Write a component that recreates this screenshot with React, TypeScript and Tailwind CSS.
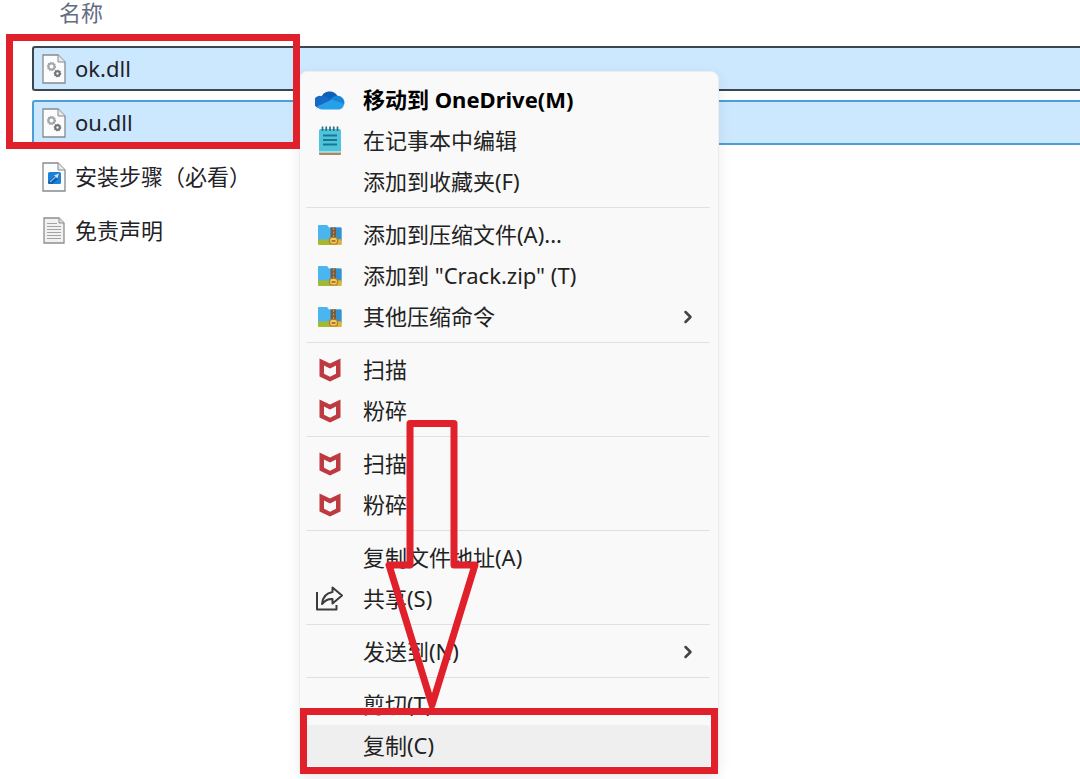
import { ChevronRight } from "lucide-react";
import type { ReactNode } from "react";

type FileKind = "dll" | "shortcut" | "text";

type FileEntry = {
  name: string;
  kind: FileKind;
  state?: "focused" | "selected";
};

type MenuEntry = {
  label: string;
  icon?: ReactNode;
  bold?: boolean;
  submenu?: boolean;
  active?: boolean;
};

function Gear({ cx, cy, r, color }: { cx: number; cy: number; r: number; color: string }) {
  return (
    <g stroke={color} fill="none">
      <circle cx={cx} cy={cy} r={r} strokeWidth="2" />
      <circle cx={cx} cy={cy} r={r + 1} strokeWidth="1.2" strokeDasharray="1.4 1" />
    </g>
  );
}

function FileIcon({ kind }: { kind: FileKind }) {
  if (kind === "text") {
    return (
      <svg viewBox="0 0 24 30" className="h-[30px] w-6 shrink-0" aria-hidden>
        <path d="M2 2H17L22 7V27H2Z" fill="#f1f1f1" stroke="#8f8f8f" strokeWidth="1.3" />
        <path d="M17 2V7H22" fill="#dcdcdc" stroke="#8f8f8f" />
        <path d="M5 7.5H15M5 10.5H19M5 13.5H19M5 16.5H19M5 19.5H19M5 22.5H19" stroke="#a3a3a3" strokeWidth="1.2" />
      </svg>
    );
  }
  return (
    <svg viewBox="0 0 24 30" className="h-[30px] w-6 shrink-0" aria-hidden>
      <path d="M1 1H16L23 8V29H1Z" fill="#fcfcfc" stroke="#858b90" strokeWidth="1.3" />
      <path d="M16 1V8H23" fill="#e9e9e9" stroke="#858b90" />
      {kind === "dll" ? (
        <>
          <Gear cx={9.5} cy={12.5} r={3} color="#a3a7aa" />
          <Gear cx={15.5} cy={19.5} r={2.2} color="#6f7578" />
        </>
      ) : (
        <>
          <rect x="6" y="10" width="13" height="12" rx="1.5" fill="#1e7fd6" />
          <path d="M6 20L13 14L17 12L16 17L10 22H7.5Q6 22 6 20Z" fill="#1559a8" />
          <path d="M12 13.5L17 11.5L15.5 16.5Z" fill="#c7e6fb" />
          <path d="M8 20L13.5 15" stroke="#7cc2f2" strokeWidth="1.2" />
        </>
      )}
    </svg>
  );
}

function OneDriveIcon() {
  return (
    <svg viewBox="0 0 30 20" className="h-5 w-[30px] shrink-0" aria-hidden>
      <path d="M6 8A9 9 0 0 1 22.5 6Q18 7 15 12L4 14Z" fill="#0f5fb8" />
      <path d="M7 6.2Q10 5.5 13.5 8L20 12L3 18A6 6 0 0 1 7 6.2Z" fill="#1769c4" />
      <path d="M15 10Q18 5.5 22.5 5.8A6.8 6.8 0 0 1 29 15L19 12Z" fill="#1784dc" />
      <path d="M2 16.5L17 9.5L29 14A5.5 5.5 0 0 1 24 19.5H7Q3.5 19.5 2 16.5Z" fill="#27a0ea" />
    </svg>
  );
}

function NotepadIcon() {
  return (
    <svg viewBox="0 0 24 30" className="h-[30px] w-6" aria-hidden>
      <rect x="1" y="3" width="22" height="24" rx="1.5" fill="#4fc3dc" />
      <path d="M1 26H23V28Q23 29 22 29H2Q1 29 1 28Z" fill="#a88967" />
      <path d="M1 26H23" stroke="#d8eef2" strokeWidth="1.2" />
      <path d="M4.5 0.5V5M8.25 0.5V5M12 0.5V5M15.75 0.5V5M19.5 0.5V5" stroke="#2d6f80" strokeWidth="1.7" />
      <path d="M5 9.5H19M5 14H19M5 18.5H19" stroke="#18778f" strokeWidth="1.8" />
    </svg>
  );
}

function ZipIcon() {
  return (
    <svg viewBox="0 0 24 22" className="h-[22px] w-6" aria-hidden>
      <path d="M0 1.5Q0 1 1 1H9L11 3.5H22.5Q23.500 3.5 23.5 4.5V17H0Z" fill="#4ab5ee" />
      <path d="M12 3.5H22.5Q23.5 3.5 23.5 4.5V17H12Z" fill="#3592d0" />
      <path d="M0 15.5H23.5V20Q23.5 21 22.5 21H1Q0 21 0 20Z" fill="#a5b832" />
      <path d="M12 15.5H23.5V20Q23.5 21 22.5 21H12Z" fill="#e2b33c" />
      <rect x="13" y="3.5" width="5" height="12" fill="#7d5a3a" />
      <path d="M15.5 4V14" stroke="#b8925e" strokeWidth="1.2" strokeDasharray="2 1.5" />
      <rect x="11.5" y="13.5" width="8" height="6.5" rx="2.5" fill="#f3cd62" stroke="#b47a1e" strokeWidth="1.2" />
      <path d="M13.5 17H17.5" stroke="#8a5a1c" strokeWidth="1.4" />
    </svg>
  );
}

function ShieldIcon() {
  return (
    <svg viewBox="0 0 22 24" className="h-6 w-[22px]" aria-hidden>
      <path
        d="M0.5 0.5L11 5.5L21.5 0.5V18.5L11 23.5L0.5 18.5ZM5 7.5V15.8L11 18.7L17 15.8V7.5L11 10.4Z"
        fill="#bd3a40"
        fillRule="evenodd"
      />
    </svg>
  );
}

function ShareIcon() {
  return (
    <svg viewBox="0 0 28 26" className="h-[26px] w-7" fill="none" stroke="#3c3c3c" strokeWidth="2" strokeLinejoin="round" aria-hidden>
      <path d="M1 6V23.5H20.5V19" />
      <path d="M16.5 1.5L26 9.500L16.5 17.5V13Q10.500 12.5 6 18Q7 7.500 16.5 6Z" />
    </svg>
  );
}

const files: FileEntry[] = [
  { name: "ok.dll", kind: "dll", state: "focused" },
  { name: "ou.dll", kind: "dll", state: "selected" },
  { name: "安装步骤（必看）", kind: "shortcut" },
  { name: "免责声明", kind: "text" },
];

const menuGroups: MenuEntry[][] = [
  [
    { label: "移动到 OneDrive(M)", icon: <OneDriveIcon />, bold: true },
    { label: "在记事本中编辑", icon: <NotepadIcon /> },
    { label: "添加到收藏夹(F)" },
  ],
  [
    { label: "添加到压缩文件(A)...", icon: <ZipIcon /> },
    { label: '添加到 "Crack.zip" (T)', icon: <ZipIcon /> },
    { label: "其他压缩命令", icon: <ZipIcon />, submenu: true },
  ],
  [
    { label: "扫描", icon: <ShieldIcon /> },
    { label: "粉碎", icon: <ShieldIcon /> },
  ],
  [
    { label: "扫描", icon: <ShieldIcon /> },
    { label: "粉碎", icon: <ShieldIcon /> },
  ],
  [{ label: "复制文件地址(A)" }, { label: "共享(S)", icon: <ShareIcon /> }],
  [{ label: "发送到(N)", submenu: true }],
  [{ label: "剪切(T)" }, { label: "复制(C)", active: true }],
];

const rowStyles = {
  focused: "border-[#3a4650] bg-[#cce8ff]",
  selected: "border-[#4a9fd8] bg-[#cce8ff]",
  none: "border-transparent",
};

function FileRow({ file }: { file: FileEntry }) {
  return (
    <li
      className={`flex h-[45px] items-center gap-[9px] rounded-l-[3px] border-2 border-r-0 pl-2 text-[#1f2328] ${rowStyles[file.state ?? "none"]}`}
    >
      <FileIcon kind={file.kind} />
      <span className="pb-0.5">{file.name}</span>
    </li>
  );
}

function MenuItem({ entry }: { entry: MenuEntry }) {
  return (
    <button
      type="button"
      role="menuitem"
      className={`flex h-[41px] w-full items-center gap-[19px] rounded-sm pr-3 pl-2.5 text-left whitespace-nowrap ${
        entry.active ? "bg-[#efefef]" : ""
      } ${entry.bold ? "font-bold text-black" : ""}`}
    >
      <span className="flex w-7 shrink-0 justify-center">{entry.icon}</span>
      <span className="flex-1 pb-0.5">{entry.label}</span>
      {entry.submenu && <ChevronRight size={20} strokeWidth={3} className="text-[#444]" />}
    </button>
  );
}

function ContextMenu() {
  return (
    <div
      role="menu"
      className="absolute top-[71px] left-[299px] w-[420px] rounded-lg border border-[#ededed] bg-[#f9f9f9] pt-[7px] pr-2 pb-2 pl-1.5 text-[#222] shadow-[0_4px_14px_rgba(0,0,0,0.08)]"
    >
      {menuGroups.map((group, i) => (
        <div key={i}>
          {i > 0 && <div role="separator" className="mt-[5px] mb-1.5 h-px bg-[#e0e0e0]" />}
          {group.map((entry, idx) => (
            <MenuItem key={idx} entry={entry} />
          ))}
        </div>
      ))}
    </div>
  );
}

export default function App() {
  return (
    <div className="relative h-screen w-full overflow-hidden bg-white font-['Noto_Sans','Noto_Sans_CJK_SC',sans-serif] text-[22px] leading-6">
      <main className="pl-8">
        <h2 className="mb-[22px] pl-[27px] text-[#626d80]">名称</h2>
        <ul className="flex flex-col gap-[9px]">
          {files.map((file) => (
            <FileRow key={file.name} file={file} />
          ))}
        </ul>
      </main>

      <ContextMenu />

      {/* Red markup on top of the window */}
      <div className="pointer-events-none absolute top-[34px] left-[6px] h-[115px] w-[294px] border-[7px] border-[#e0202a]" />
      <svg
        viewBox="0 0 100 294"
        className="pointer-events-none absolute top-[418px] left-[382px] h-[294px] w-[100px]"
        fill="none"
        stroke="#e0202a"
        strokeWidth="7"
        strokeLinejoin="round"
        aria-hidden
      >
        <path d="M28 5.5H72V147H93L50 287L7 147H28Z" />
      </svg>
      <div className="pointer-events-none absolute top-[708px] left-[300px] h-[66px] w-[418px] border-[7px] border-[#e0202a]" />
    </div>
  );
}
